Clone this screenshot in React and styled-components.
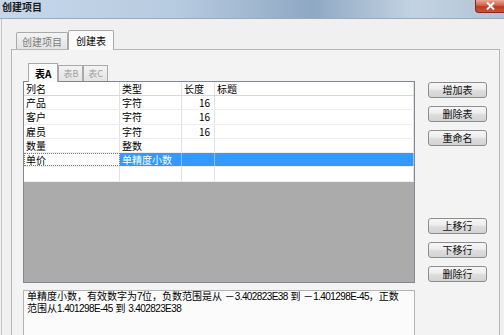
import React from 'react';
import styled, { createGlobalStyle } from 'styled-components';

const Global = createGlobalStyle`
  html, body { margin: 0; padding: 0; background: #f0f0f0; }
  body {
    font-family: "Noto Sans CJK SC", "Liberation Sans", sans-serif;
    font-size: 10px;
    color: #000;
  }
`;

const Window = styled.div`
  width: 504px;
  height: 335px;
  overflow: hidden;
  display: flex;
  flex-direction: column;
  background: #f0f0f0;
`;

const TitleBar = styled.div`
  height: 19px;
  flex: none;
  box-sizing: border-box;
  display: flex;
  justify-content: space-between;
  align-items: flex-start;
  border-bottom: 1px solid #9ea9b5;
  background: linear-gradient(to right, #c6d7ea 0%, #b7cbe0 35%, #8fa8c3 62%, #c3d3e2 82%, #b2c3d5 100%);
`;

const Title = styled.div`
  padding: 0 0 0 2px;
  font-size: 10px;
  line-height: 14px;
  font-weight: bold;
  color: #1a1a1a;
`;

const CloseBtn = styled.div`
  width: 29px;
  height: 13px;
  box-sizing: border-box;
  border: 1px solid #7d2b1f;
  border-top: none;
  border-right: none;
  border-bottom-left-radius: 4px;
  background: linear-gradient(#e9a899 0%, #d3604a 45%, #c0391f 55%, #c9553a 100%);
  display: flex;
  align-items: center;
  justify-content: center;
`;

const Body = styled.div`
  flex: 1;
  display: flex;
  flex-direction: column;
  margin-left: 1px;
  border-left: 1px solid #c4c4c4;
  padding: 11px 4px 0 9px;
  min-height: 0;
`;

const OuterTabs = styled.div`
  height: 19px;
  display: flex;
  align-items: flex-end;
  padding-left: 5px;
`;

const OuterTab = styled.div`
  box-sizing: border-box;
  height: ${p => (p.$active ? 20 : 17)}px;
  margin-bottom: ${p => (p.$active ? -1 : 0)}px;
  padding: 0 ${p => (p.$active ? 7 : 5)}px;
  border: 1px solid #a9a9a9;
  border-bottom: none;
  border-radius: 2px 2px 0 0;
  background: ${p => (p.$active ? '#fbfbfb' : 'linear-gradient(#f3f3f3, #e3e3e3)')};
  color: ${p => (p.$active ? '#000' : '#7b7b7b')};
  display: flex;
  align-items: center;
  position: relative;
  z-index: 1;
`;

const OuterPanel = styled.div`
  flex: 1;
  display: flex;
  gap: 13px;
  border: 1px solid #b6b6b6;
  border-bottom: none;
  background: #f3f3f3;
  padding: 13px 12px 0 11px;
  min-height: 0;
`;

const LeftCol = styled.div`
  width: 392px;
  display: flex;
  flex-direction: column;
`;

const InnerTabs = styled.div`
  height: 18px;
  display: flex;
  align-items: flex-end;
  padding-left: 5px;
`;

const InnerTab = styled.div`
  box-sizing: border-box;
  height: ${p => (p.$active ? 19 : 16)}px;
  margin-bottom: ${p => (p.$active ? -1 : 0)}px;
  padding: 0 ${p => (p.$active ? 6 : 4)}px;
  border: 1px solid #a9a9a9;
  border-bottom: none;
  background: ${p => (p.$active ? '#fbfbfb' : 'linear-gradient(#f3f3f3, #e3e3e3)')};
  color: ${p => (p.$active ? '#000' : '#a0a0a0')};
  font-weight: ${p => (p.$active ? 'bold' : 'normal')};
  font-size: ${p => (p.$active ? 10 : 9)}px;
  display: flex;
  align-items: center;
  position: relative;
  z-index: 1;
`;

const Grid = styled.div`
  box-sizing: border-box;
  height: 202px;
  border: 1px solid #828790;
  background: #ababab;
  flex: none;
`;

const Row = styled.div`
  display: grid;
  grid-template-columns: 96px 62px 33px 1fr;
  height: ${p => (p.$head ? 14 : 14.3)}px;
  box-sizing: border-box;
  background: #fff;
  border-bottom: 1px solid ${p => (p.$head ? '#d8d8d8' : '#eeeeee')};
`;

const Cell = styled.div`
  box-sizing: border-box;
  padding: 0 ${p => (p.$right ? 4 : 2)}px;
  text-align: ${p => (p.$right ? 'right' : 'left')};
  line-height: 13px;
  white-space: nowrap;
  border-right: 1px solid ${p => (p.$sel ? '#8cc2ff' : '#e2e2e2')};
  background: ${p => (p.$sel ? '#3399ff' : 'transparent')};
  color: ${p => (p.$sel ? '#fff' : '#000')};
  ${p => p.$edit && 'outline: 1px dotted #777; outline-offset: -1px;'}
`;

const Desc = styled.div`
  flex: 1;
  margin-top: 7px;
  border: 1px solid #b3b3b3;
  border-bottom: none;
  background: #fbfbfb;
  padding: 0 3px;
  font-family: "Liberation Sans", "Noto Sans CJK SC", sans-serif;
  line-height: 12px;
  white-space: pre;
`;

const Num = styled.span`
  letter-spacing: -0.6px;
`;

const RightCol = styled.div`
  width: 59px;
  display: flex;
  flex-direction: column;
  gap: 8px;
  padding-top: 19px;
`;

const Button = styled.button`
  width: 59px;
  height: 16px;
  box-sizing: border-box;
  padding: 0;
  margin-top: ${p => p.$gap || 0}px;
  border: 1px solid #8d8d8d;
  border-radius: 3px;
  background: linear-gradient(#f7f7f7 0%, #ececec 45%, #dedede 52%, #d2d2d2 100%);
  font-family: "Noto Sans CJK SC", sans-serif;
  font-size: 10px;
  line-height: 14px;
  color: #111;
`;

const rows = [
  ['产品', '字符', '16', ''],
  ['客户', '字符', '16', ''],
  ['雇员', '字符', '16', ''],
  ['数量', '整数', '', ''],
  ['单价', '单精度小数', '', '', true],
  ['', '', '', ''],
];

export default function App() {
  return (
    <Window>
      <Global />
      <TitleBar>
        <Title>创建项目</Title>
        <CloseBtn>
          <svg width="9" height="8" viewBox="0 0 9 8">
            <path d="M1 0.5 L8 7.5 M8 0.5 L1 7.5" stroke="#fff" strokeWidth="2" />
          </svg>
        </CloseBtn>
      </TitleBar>
      <Body>
        <OuterTabs>
          <OuterTab>创建项目</OuterTab>
          <OuterTab $active>创建表</OuterTab>
        </OuterTabs>
        <OuterPanel>
          <LeftCol>
            <InnerTabs>
              <InnerTab $active>表A</InnerTab>
              <InnerTab>表B</InnerTab>
              <InnerTab>表C</InnerTab>
            </InnerTabs>
            <Grid>
              <Row $head>
                <Cell>列名</Cell>
                <Cell>类型</Cell>
                <Cell>长度</Cell>
                <Cell>标题</Cell>
              </Row>
              {rows.map((r, i) => (
                <Row key={i}>
                  <Cell $edit={r[4]}>{r[0]}</Cell>
                  <Cell $sel={r[4]}>{r[1]}</Cell>
                  <Cell $sel={r[4]} $right>{r[2]}</Cell>
                  <Cell $sel={r[4]}>{r[3]}</Cell>
                </Row>
              ))}
            </Grid>
            <Desc>
              单精度小数，有效数字为<Num>7</Num>位，负数范围是从 －<Num>3.402823E38</Num> 到 －<Num>1.401298E-45</Num>，正数{'\n'}
              范围从<Num>1.401298E-45</Num> 到 <Num>3.402823E38</Num>
            </Desc>
          </LeftCol>
          <RightCol>
            <Button>增加表</Button>
            <Button>删除表</Button>
            <Button>重命名</Button>
            <Button $gap={64}>上移行</Button>
            <Button>下移行</Button>
            <Button>删除行</Button>
          </RightCol>
        </OuterPanel>
      </Body>
    </Window>
  );
}
